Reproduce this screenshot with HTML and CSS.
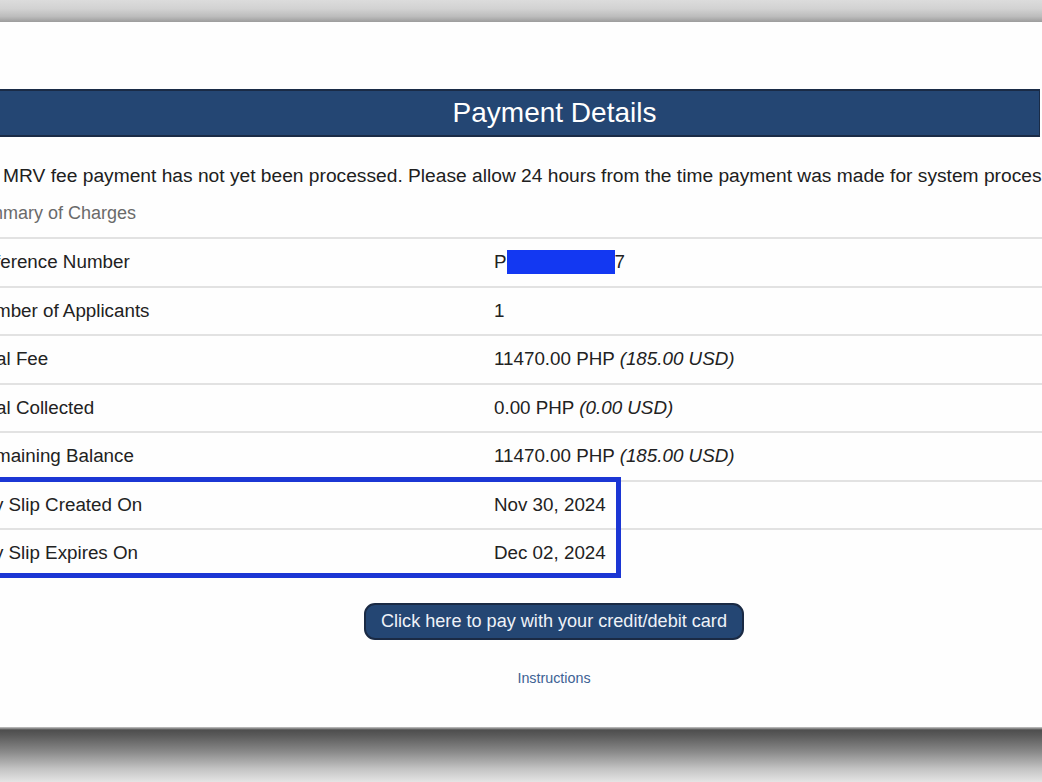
FILE: index.html
```html
<!DOCTYPE html>
<html lang="en">
<head>
<meta charset="utf-8">
<title>Payment Details</title>
<link rel="stylesheet" href="styles.css">
</head>
<body>
<div class="screen">
  <div class="bezel-top"></div>
  <div class="page">
    <div class="container">
      <div class="title-bar">Payment Details</div>
      <p class="notice">Your MRV fee payment has not yet been processed. Please allow 24 hours from the time payment was made for system processing.</p>
      <div class="summary">Summary of Charges</div>
      <div class="charges">
        <div class="row"><div class="label">Reference Number</div><div class="value">P<span class="redact"></span>7</div></div>
        <div class="row"><div class="label">Number of Applicants</div><div class="value">1</div></div>
        <div class="row"><div class="label">Total Fee</div><div class="value">11470.00 PHP <em>(185.00 USD)</em></div></div>
        <div class="row"><div class="label">Total Collected</div><div class="value">0.00 PHP <em>(0.00 USD)</em></div></div>
        <div class="row"><div class="label">Remaining Balance</div><div class="value">11470.00 PHP <em>(185.00 USD)</em></div></div>
        <div class="row"><div class="label">Pay Slip Created On</div><div class="value">Nov 30, 2024</div></div>
        <div class="row"><div class="label">Pay Slip Expires On</div><div class="value">Dec 02, 2024</div></div>
        <div class="highlight"></div>
      </div>
      <div class="actions">
        <button class="pay-btn" type="button">Click here to pay with your credit/debit card</button>
        <a class="instructions" href="#">Instructions</a>
      </div>
    </div>
  </div>
  <div class="bezel-bottom"></div>
</div>
</body>
</html>
```

FILE: styles.css
```css
* { box-sizing: border-box; }

html, body {
  margin: 0;
  padding: 0;
  width: 1042px;
  height: 782px;
  overflow: hidden;
  background: #fdfdfd;
  font-family: "Liberation Sans", Arial, Helvetica, sans-serif;
  color: #222;
}

.screen {
  display: flex;
  flex-direction: column;
  width: 1042px;
  height: 782px;
}

.bezel-top {
  height: 22px;
  flex: none;
  background: linear-gradient(to bottom, #dcdcdc 0%, #d2d2d2 40%, #bcbcbc 75%, #a6a6a6 92%, #9c9c9c 100%);
  box-shadow: 0 1px 3px rgba(0,0,0,0.08);
}

.bezel-bottom {
  height: 55px;
  flex: none;
  background: linear-gradient(to bottom, #c8c8c8 0px, #4e4e4e 3px, #595959 8px, #8a8a8a 25px, #c4c4c4 42px, #e4e4e4 55px);
}

.page {
  flex: 1;
  overflow: hidden;
  background: #fefefe;
  padding-top: 67px;
}

.container {
  width: 1182px;
  margin-left: -37px;
}

.title-bar {
  height: 48px;
  margin-right: 105px;
  padding-left: 105px;
  background: #244673;
  border: 2px solid #1a2b46;
  border-right-width: 1px;
  color: #fff;
  font-size: 28px;
  line-height: 44px;
  text-align: center;
}

.notice {
  margin: 27px 0 0 -4px;
  font-size: 19.2px;
  line-height: 24px;
  white-space: nowrap;
  color: #202020;
}

.summary {
  margin-top: 13px;
  font-size: 18px;
  line-height: 24px;
  color: #6a6a6a;
  padding-left: 3px;
}

.charges {
  position: relative;
  margin-top: 12px;
}

.row {
  display: grid;
  grid-template-columns: 523px 1fr;
  align-items: center;
  height: 48.5px;
  padding-left: 8px;
  border-top: 2px solid #e2e2e2;
  font-size: 18.8px;
  color: #222;
}

.value em { font-style: italic; }

.redact {
  display: inline-block;
  width: 108px;
  height: 24px;
  vertical-align: -6px;
  background: #1338f2;
}

.highlight {
  position: absolute;
  top: 240px;
  left: -20px;
  width: 678px;
  height: 101px;
  border: 5px solid #1b36d4;
}

.actions {
  display: flex;
  flex-direction: column;
  align-items: center;
  padding-top: 26px;
}

.pay-btn {
  width: 380px;
  height: 37px;
  border: 2px solid #1a2a44;
  border-radius: 11px;
  background: #244673;
  color: #eef2f8;
  font-family: "Liberation Sans", Arial, Helvetica, sans-serif;
  font-size: 18.1px;
  padding: 0;
}

.instructions {
  margin-top: 29px;
  font-size: 14.3px;
  line-height: 18px;
  color: #3d6294;
  text-decoration: none;
}
```
